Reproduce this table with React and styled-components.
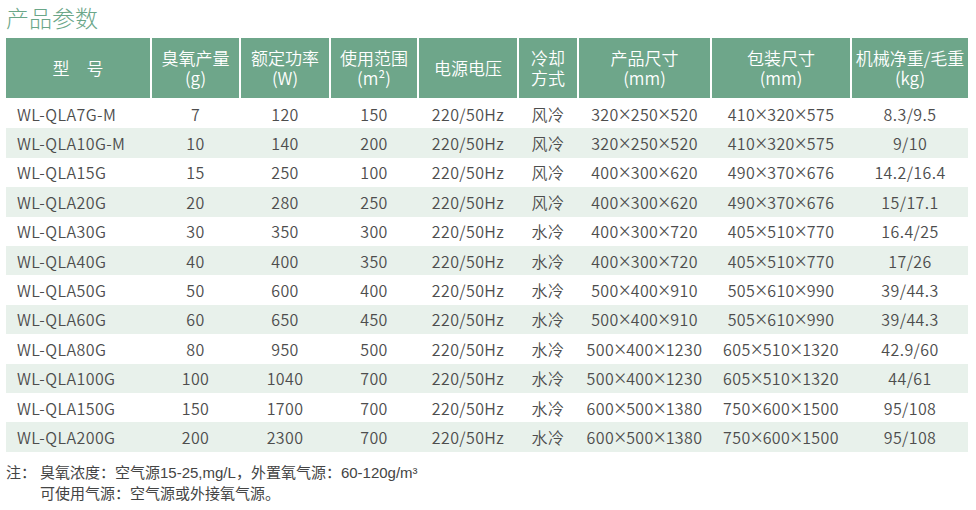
import React from 'react';
import styled, { createGlobalStyle } from 'styled-components';

const GlobalStyle = createGlobalStyle`
  body {
    margin: 0;
    background: #fff;
    font-family: "Noto Sans CJK SC", "Noto Sans", sans-serif;
  }
`;

const COLUMNS = '144px 87px 88px 86px 98px 58px 131px 138px 116px';

const Page = styled.div`
  padding: 0 6px;
  width: 962px;
`;

const Title = styled.h2`
  margin: 0;
  height: 38px;
  line-height: 34px;
  font-size: 23px;
  font-weight: 300;
  color: #6aa688;
`;

const HeaderRow = styled.div`
  display: grid;
  grid-template-columns: ${COLUMNS};
  column-gap: 2px;
  height: 60px;
`;

const HeadCell = styled.div`
  background: #6ea68a;
  color: #fff;
  font-size: 17px;
  font-weight: 350;
  line-height: 20px;
  display: flex;
  flex-direction: column;
  align-items: center;
  justify-content: center;
  text-align: center;
  white-space: nowrap;
`;

const Body = styled.div`
  margin-top: 1px;
`;

const Row = styled.div`
  display: grid;
  grid-template-columns: ${COLUMNS};
  column-gap: 2px;
  height: 29.4px;
  align-items: center;
  background: ${(p) => (p.$striped ? '#e8f1eb' : 'transparent')};
`;

const Cell = styled.div`
  font-size: 16px;
  font-weight: 350;
  letter-spacing: 0.4px;
  line-height: 20px;
  color: #4d4d4d;
  white-space: nowrap;
  text-align: ${(p) => (p.$left ? 'left' : 'center')};
  padding-left: ${(p) => (p.$left ? '11px' : '0')};
`;

const Times = styled.span`
  font-family: "Noto Sans", sans-serif;
  font-size: 21px;
  font-weight: 300;
  letter-spacing: 0;
  vertical-align: -1px;
`;

const Notes = styled.div`
  display: flex;
  margin-top: 10px;
  font-family: "Liberation Sans", "Noto Sans CJK SC", sans-serif;
  font-size: 15px;
  line-height: 21px;
  color: #444;
`;

const NoteLabel = styled.div`
  width: 34px;
  flex: none;
`;

const NoteLines = styled.div`
  display: flex;
  flex-direction: column;
`;

const headers = [
  ['型　号'],
  ['臭氧产量', '(g)'],
  ['额定功率', '(W)'],
  ['使用范围', '(m²)'],
  ['电源电压'],
  ['冷却', '方式'],
  ['产品尺寸', '(mm)'],
  ['包装尺寸', '(mm)'],
  ['机械净重/毛重', '(kg)'],
];

const rows = [
  ['WL-QLA7G-M', '7', '120', '150', '220/50Hz', '风冷', '320×250×520', '410×320×575', '8.3/9.5'],
  ['WL-QLA10G-M', '10', '140', '200', '220/50Hz', '风冷', '320×250×520', '410×320×575', '9/10'],
  ['WL-QLA15G', '15', '250', '100', '220/50Hz', '风冷', '400×300×620', '490×370×676', '14.2/16.4'],
  ['WL-QLA20G', '20', '280', '250', '220/50Hz', '风冷', '400×300×620', '490×370×676', '15/17.1'],
  ['WL-QLA30G', '30', '350', '300', '220/50Hz', '水冷', '400×300×720', '405×510×770', '16.4/25'],
  ['WL-QLA40G', '40', '400', '350', '220/50Hz', '水冷', '400×300×720', '405×510×770', '17/26'],
  ['WL-QLA50G', '50', '600', '400', '220/50Hz', '水冷', '500×400×910', '505×610×990', '39/44.3'],
  ['WL-QLA60G', '60', '650', '450', '220/50Hz', '水冷', '500×400×910', '505×610×990', '39/44.3'],
  ['WL-QLA80G', '80', '950', '500', '220/50Hz', '水冷', '500×400×1230', '605×510×1320', '42.9/60'],
  ['WL-QLA100G', '100', '1040', '700', '220/50Hz', '水冷', '500×400×1230', '605×510×1320', '44/61'],
  ['WL-QLA150G', '150', '1700', '700', '220/50Hz', '水冷', '600×500×1380', '750×600×1500', '95/108'],
  ['WL-QLA200G', '200', '2300', '700', '220/50Hz', '水冷', '600×500×1380', '750×600×1500', '95/108'],
];

// the multiplication sign is drawn larger and thinner than the digits
const renderValue = (value) => {
  if (!value.includes('×')) return value;
  return value.split('×').map((part, i) => (
    <React.Fragment key={i}>
      {i > 0 && <Times>×</Times>}
      {part}
    </React.Fragment>
  ));
};

const App = () => {
  return (
    <Page>
      <GlobalStyle />
      <Title>产品参数</Title>
      <HeaderRow>
        {headers.map((lines, i) => (
          <HeadCell key={i}>
            {lines.map((line) => (
              <span key={line}>{line}</span>
            ))}
          </HeadCell>
        ))}
      </HeaderRow>
      <Body>
        {rows.map((row, i) => (
          <Row key={row[0]} $striped={i % 2 === 1}>
            {row.map((value, j) => (
              <Cell key={j} $left={j === 0}>
                {renderValue(value)}
              </Cell>
            ))}
          </Row>
        ))}
      </Body>
      <Notes>
        <NoteLabel>注：</NoteLabel>
        <NoteLines>
          <span>臭氧浓度：空气源15-25,mg/L，外置氧气源：60-120g/m³</span>
          <span>可使用气源：空气源或外接氧气源。</span>
        </NoteLines>
      </Notes>
    </Page>
  );
};

export default App;
